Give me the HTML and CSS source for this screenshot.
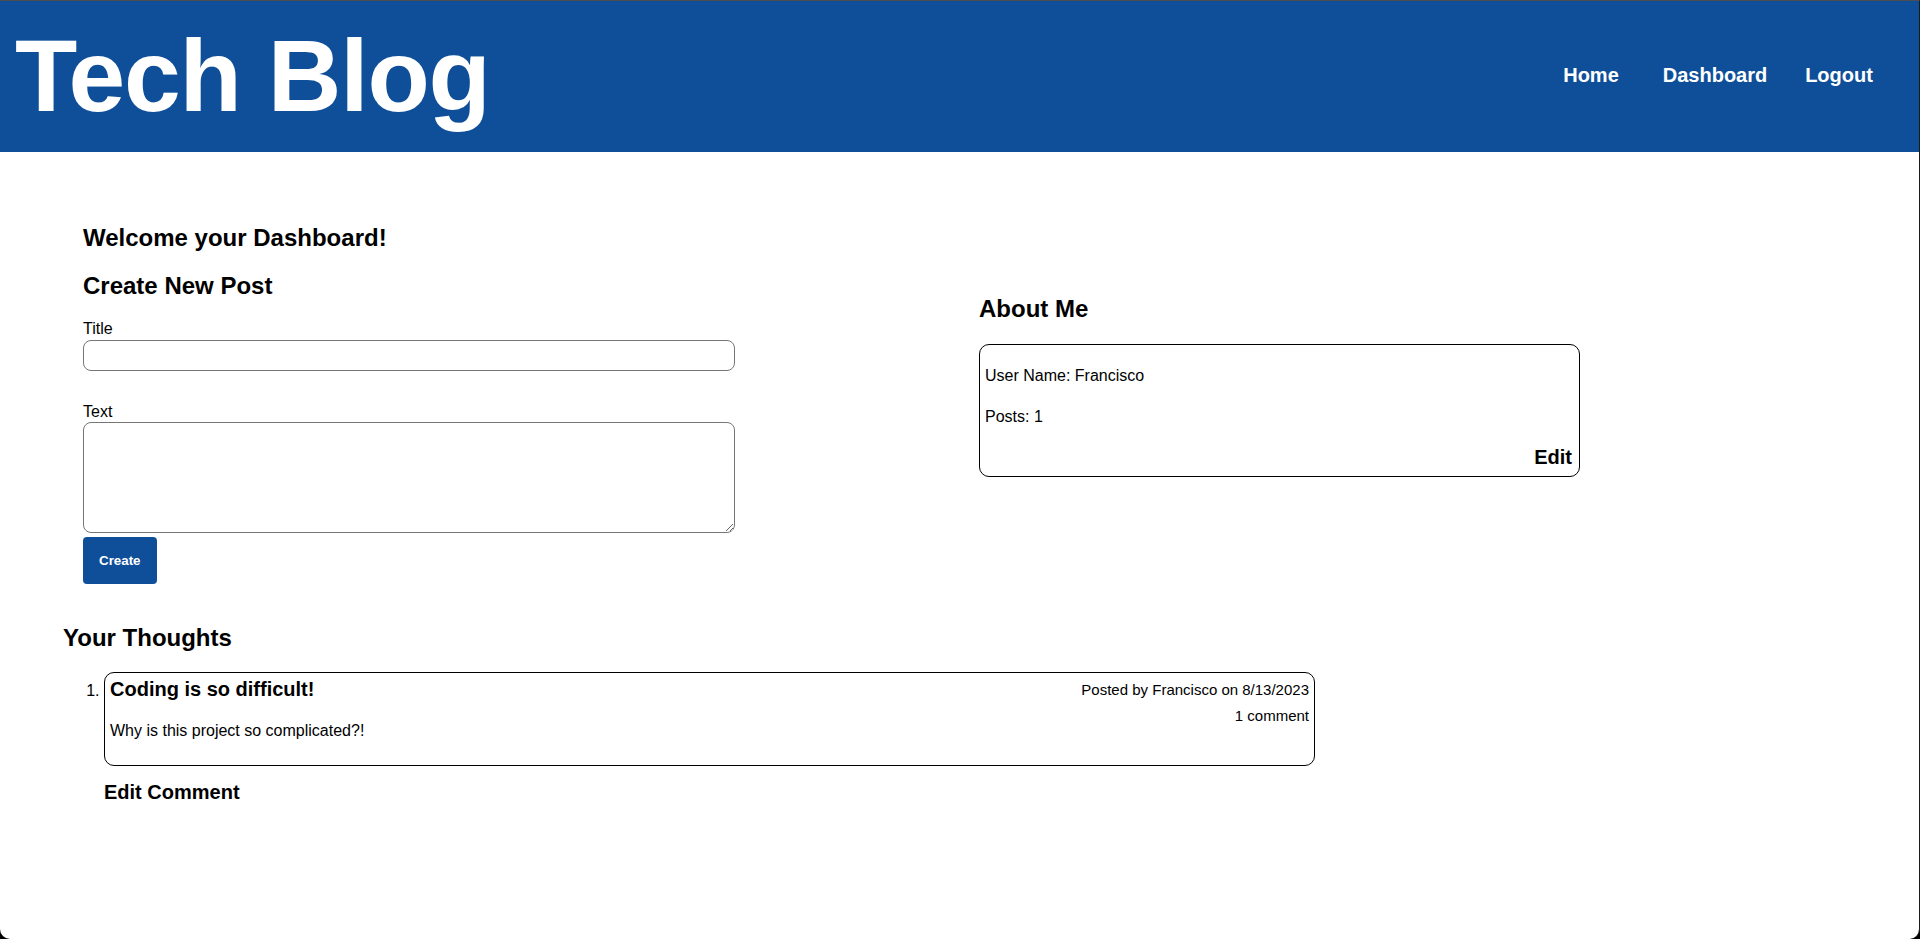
FILE: index.html
```html
<!DOCTYPE html>
<html lang="en">
<head>
<meta charset="utf-8">
<title>Tech Blog</title>
<link rel="stylesheet" href="styles.css">
</head>
<body>
<div class="window">
  <header class="site-header">
    <h1 class="brand">Tech Blog</h1>
    <nav class="nav">
      <a class="nav-link" href="#">Home</a>
      <a class="nav-link" href="#">Dashboard</a>
      <a class="nav-link" href="#">Logout</a>
    </nav>
  </header>
  <main class="dashboard">
    <div class="top-row">
      <section class="create-col">
        <h2 class="heading welcome">Welcome your Dashboard!</h2>
        <h2 class="heading create-title">Create New Post</h2>
        <form class="post-form">
          <label class="field-label" for="title">Title</label>
          <input class="field-input" id="title" type="text">
          <label class="field-label label-text" for="text">Text</label>
          <textarea class="field-textarea" id="text"></textarea>
          <div class="btn-row"><button class="create-btn" type="button">Create</button></div>
        </form>
      </section>
      <section class="about-col">
        <h2 class="heading about-title">About Me</h2>
        <div class="about-card">
          <p class="about-line">User Name: Francisco</p>
          <p class="about-line posts">Posts: 1</p>
          <div class="about-edit">Edit</div>
        </div>
      </section>
    </div>
    <section class="thoughts">
      <h2 class="heading thoughts-title">Your Thoughts</h2>
      <ol class="post-list">
        <li class="post-item">
          <article class="post-card">
            <div class="post-main">
              <h3 class="post-title">Coding is so difficult!</h3>
              <p class="post-body">Why is this project so complicated?!</p>
            </div>
            <div class="post-meta">
              <span class="meta-line">Posted by Francisco on 8/13/2023</span>
              <span class="meta-line comments">1 comment</span>
            </div>
          </article>
          <h3 class="edit-comment">Edit Comment</h3>
        </li>
      </ol>
    </section>
  </main>
</div>
</body>
</html>
```

FILE: styles.css
```css
html {
  background: #000;
}

body {
  margin: 0;
  font-family: "Liberation Sans", Arial, Helvetica, sans-serif;
  color: #000;
}

.window {
  height: 939px;
  box-sizing: border-box;
  background: #fff;
  border-top: 1px solid #4d4d4d;
  border-right: 1px solid #1a1a1a;
  border-radius: 0 0 10px 10px;
  overflow: hidden;
}

.site-header {
  height: 151px;
  background: #0f4f99;
  display: flex;
  justify-content: space-between;
  align-items: flex-start;
  padding: 0 18px 0 15px;
  box-sizing: border-box;
}

.brand {
  margin: 17px 0 0;
  font-size: 102px;
  line-height: 1.15;
  letter-spacing: -1.2px;
  font-weight: bold;
  color: #fff;
}

.nav {
  display: flex;
  margin-top: 63px;
}

.nav-link {
  width: 124px;
  text-align: center;
  color: #fff;
  font-weight: bold;
  font-size: 20px;
  text-decoration: none;
}

.dashboard {
  padding-top: 52px;
}

.top-row {
  display: flex;
  align-items: flex-start;
  padding-left: 83px;
}

.heading {
  font-size: 24px;
  font-weight: bold;
  margin: 20px 0;
}

.create-col {
  width: 652px;
}

.post-form {
  display: flex;
  flex-direction: column;
}

.field-label {
  font-size: 16px;
  line-height: normal;
}

.field-input {
  margin: 2px 0 0;
  height: 31px;
  box-sizing: border-box;
  border: 1px solid #767676;
  border-radius: 8px;
  font-family: inherit;
  font-size: 16px;
  padding: 2px 6px;
}

.label-text {
  margin-top: 32px;
}

.field-textarea {
  margin: 1px 0 0;
  height: 111px;
  box-sizing: border-box;
  border: 1px solid #767676;
  border-radius: 8px;
  font-family: inherit;
  font-size: 16px;
  padding: 2px 6px;
  resize: vertical;
}

.btn-row {
  margin-top: 4px;
}

.create-btn {
  background: #0f4f99;
  color: #fff;
  border: none;
  border-radius: 4px;
  padding: 16px;
  font-family: inherit;
  font-size: 13.33px;
  font-weight: bold;
  height: 47px;
  line-height: 15px;
}

.about-col {
  width: 601px;
  margin-left: 244px;
  margin-top: 71px;
}

.about-title {
  margin-bottom: 21px;
}

.about-card {
  border: 1px solid #000;
  border-radius: 10px;
  padding: 22px 7px 7px 5px;
}

.about-line {
  margin: 0;
  font-size: 16px;
}

.about-line.posts {
  margin-top: 23px;
}

.about-edit {
  margin-top: 20px;
  text-align: right;
  font-size: 20px;
  font-weight: bold;
}

.thoughts {
  padding-left: 63px;
}

.thoughts-title {
  margin-top: 40px;
}

.post-list {
  margin: 0;
  padding-left: 41px;
  font-size: 16px;
}

.post-card {
  width: 1211px;
  box-sizing: border-box;
  border: 1px solid #000;
  border-radius: 10px;
  padding: 5px;
  display: flex;
  justify-content: space-between;
  align-items: flex-start;
}

.post-main {
  flex: 1;
}

.post-title {
  margin: 0;
  font-size: 20px;
  font-weight: bold;
}

.post-body {
  margin: 21px 0 20px;
  font-size: 16px;
}

.post-meta {
  display: flex;
  flex-direction: column;
  align-items: flex-end;
  font-size: 15px;
  padding-top: 3px;
}

.meta-line.comments {
  margin-top: 9px;
}

.edit-comment {
  margin: 15px 0 0;
  font-size: 20px;
  font-weight: bold;
}
```
